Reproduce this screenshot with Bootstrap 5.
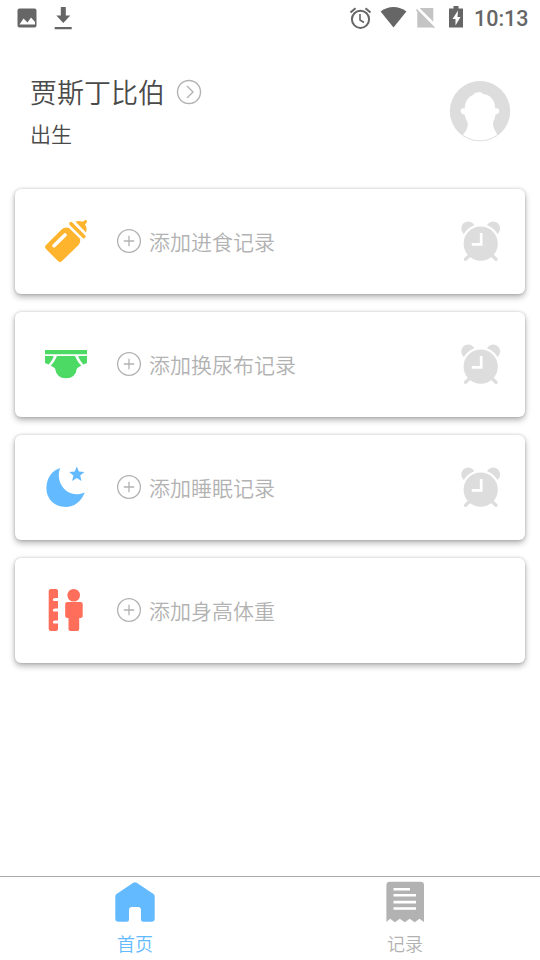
<!DOCTYPE html>
<html lang="zh-CN">
<head>
<meta charset="utf-8">
<meta name="viewport" content="width=device-width, initial-scale=1">
<title>首页</title>
<link href="https://cdn.jsdelivr.net/npm/bootstrap@5.3.0/dist/css/bootstrap.min.css" rel="stylesheet">
<style>
  body { font-family: "Noto Sans CJK SC", sans-serif; font-weight: 350; color: #4a4a4a; background: #fff; height: 960px; overflow: hidden; }
  svg { display: block; flex: none; }
  .status-strip { height: 36px; color: #666; }
  .clock { font: 500 21.5px/36px Roboto, sans-serif; width: 66px; padding-top: 1px; height: 36px; white-space: nowrap; }
  .profile { height: 153px; padding: 36px 29px 0 30px; }
  .baby-name { font-size: 27px; line-height: 40px; font-weight: 350; }
  .baby-age { font-size: 21px; line-height: 32px; padding-top: 5px; }
  .records { padding: 0 15px; gap: 18px; }
  .record { height: 105px; border: 0; border-radius: 6px; box-shadow: 0 3px 6px rgba(0,0,0,.3), 0 0 3px rgba(0,0,0,.18); color: #b2b2b2; padding: 0 23px 2px 29px; }
  .record-label { font-size: 21px; line-height: 30px; }
  .add-mark { margin: 0 7px 0 28px; }
  .tabs { height: 84px; border-top: 1px solid #aaa; }
  .tab { color: #b2b2b2; font-size: 18px; line-height: 26px; padding-top: 3px; gap: 6px; }
  .tab.active { color: #64baff; }
</style>
<script src="https://cdn.jsdelivr.net/npm/bootstrap@5.3.0/dist/js/bootstrap.bundle.min.js"></script>
</head>
<body class="d-flex flex-column m-0">
<svg width="0" height="0" class="position-absolute" aria-hidden="true">
  <symbol id="plus" viewBox="0 0 26 26"><g fill="none" stroke="#b2b2b2" stroke-width="1.3"><circle cx="13" cy="13" r="11.4"/><path d="M13 7.8v10.4M7.8 13h10.4"/></g></symbol>
  <symbol id="alarm" viewBox="460 218.500 42 44">
    <g fill="#ddd"><circle cx="468.2" cy="228" r="6.900"/><circle cx="493.2" cy="228" r="6.900"/></g>
    <circle cx="480.700" cy="243.200" r="18.300" fill="#ddd" stroke="#fff" stroke-width="2.400"/>
    <path d="M470 254.500l-4.500 4.300M491.500 254.500l4.500 4.300" stroke="#ddd" stroke-width="3.300" stroke-linecap="round"/>
    <path d="M481.200 232.500v11.400h-9.400" fill="none" stroke="#fff" stroke-width="2.700"/>
  </symbol>
</svg>

<header class="status-strip d-flex align-items-center justify-content-between flex-shrink-0">
  <svg width="90" height="36" viewBox="0 0 90 36" fill="#666">
    <path fill-rule="evenodd" d="M19.500 8.500h15a2 2 0 0 1 2 2v15a2 2 0 0 1-2 2h-15a2 2 0 0 1-2-2v-15a2 2 0 0 1 2-2zM19.500 24.500h15.500v-2.500l-4-4.500-3.500 5-4-4z"/>
    <path d="M60.800 7h5v8.500h4.500L63.300 23l-7-7.500h4.500zM54.700 27h17v2.200h-17z"/>
  </svg>
  <div class="d-flex">
    <svg width="127" height="36" viewBox="347 0 127 36">
      <g fill="none" stroke="#666" stroke-width="2"><circle cx="360.500" cy="19.300" r="8.600"/><path d="M350.500 12.500l5-4.200M365.500 8.300l5 4.200"/><path d="M360 14v6l4 2.500" stroke-width="1.600"/></g>
      <path d="M393.500 27.500L380.600 11.500C388 5.500 399 5.500 406.400 11.500z" fill="#666"/>
      <path d="M420.300 8H433.300v13.800L420 8.500zM417.300 10.500L433.500 27.500H417.300z" fill="#c4c4c4"/>
      <path d="M416.300 9.500l18 18.200" stroke="#c4c4c4" stroke-width="1.600"/>
      <path d="M453.500 6h5v2.500h4.500v19h-14v-19h4.500z" fill="#666"/>
      <path d="M458 10.500l-5.500 8.500h3v6.500l5-8.500h-3z" fill="#fff"/>
    </svg>
    <span class="clock">10:13</span>
  </div>
</header>

<section class="profile d-flex justify-content-between flex-shrink-0">
  <div>
    <div class="d-flex align-items-center">
      <h1 class="baby-name m-0">贾斯丁比伯</h1>
      <svg class="ms-2" width="32" height="28" viewBox="173 78 32 28" fill="none" stroke="#b2b2b2" stroke-width="1.400"><circle cx="189" cy="92" r="11.500"/><path d="M187 86l6 6-6 6"/></svg>
    </div>
    <div class="baby-age">出生</div>
  </div>
  <svg class="mt-2" width="62" height="62" viewBox="449 79.500 62 62">
    <circle cx="480" cy="110.700" r="30" fill="#ddd"/>
    <path d="M473.500 94.200c1.500-2.700 8.500-3.200 9.500-.7 7 .8 11.800 5.500 12.300 14.400 5.200-1.200 5.400 6 .2 6-.3 3.500-1.500 5.600-2.300 7.600-.7 4.500 1 7.500 3 10.500Q497 134.500 497.500 134.700A29.600 29.600 0 0 1 462.500 134.700Q464 133.500 464.600 132c2.500-3 3.600-6 2.900-10.500-1-2-2.200-4-2.900-7.600-5.200 0-5.400-7.200.1-6 .3-7.500 4-11.700 8.800-13.700z" fill="#fff"/>
    <circle cx="480" cy="110.700" r="29.600" fill="none" stroke="#ddd" stroke-width=".8"/>
  </svg>
</section>

<main class="records d-flex flex-column flex-grow-1">
  <div class="record card flex-row align-items-center">
    <svg width="44" height="44" viewBox="44 219 44 44" fill="#ffb42d">
      <path d="M61.500 229.500Q65 226.300 69 228L79.800 238.500Q81 242 78.500 245L62 261Q60 263 58 261L46 249Q44 247 46 245z"/>
      <path d="M54 245.700L65 235" stroke="#fff" stroke-width="3.600" stroke-linecap="round"/>
      <path d="M71 223.800L83.800 236.500" stroke="#ffb42d" stroke-width="3.700" stroke-linecap="round"/>
      <path d="M75.500 221.800Q79 220 82.500 221.800L85.300 220Q87.500 219.800 87 222.300L85 224.500Q87.500 228 86 232.500z"/>
    </svg>
    <svg class="add-mark" width="26" height="26"><use href="#plus"/></svg>
    <span class="record-label">添加进食记录</span>
    <svg class="ms-auto" width="42" height="44"><use href="#alarm"/></svg>
  </div>
  <div class="record card flex-row align-items-center">
    <svg width="44" height="44" viewBox="44 342 44 44" fill="#4cd964">
      <path d="M45 350h42v4.200H45zM45 356h7.500q1.800 0 .9 1.600-2 4-4.600 6.900L45 363zM87 356h-7.500q-1.800 0-.9 1.600 2 4 4.600 6.900L87 363zM57 356h18q2.800 6.500 6.300 9.500L77 368.200Q75.500 378.200 66 378.200T55 368.200L50.700 365.500Q54.200 362.500 57 356z"/>
    </svg>
    <svg class="add-mark" width="26" height="26"><use href="#plus"/></svg>
    <span class="record-label">添加换尿布记录</span>
    <svg class="ms-auto" width="42" height="44"><use href="#alarm"/></svg>
  </div>
  <div class="record card flex-row align-items-center">
    <svg width="44" height="44" viewBox="44 465 44 44" fill="#64baff">
      <path d="M60.200 468C54.500 482 67 500 84.800 492.500 81 502 74 507 65.500 507 54 507 46.400 498.500 46.400 488.500 46.400 478 52 470.500 60.200 468z"/>
      <path d="M76.800 466.500l2.100 5.100 5.500.4-4.200 3.600 1.300 5.400-4.700-2.900-4.700 2.900 1.300-5.400-4.200-3.600 5.500-.4z"/>
    </svg>
    <svg class="add-mark" width="26" height="26"><use href="#plus"/></svg>
    <span class="record-label">添加睡眠记录</span>
    <svg class="ms-auto" width="42" height="44"><use href="#alarm"/></svg>
  </div>
  <div class="record card flex-row align-items-center">
    <svg width="44" height="44" viewBox="44 588 44 44" fill="#ff6e5a">
      <path d="M51 589h5q2 0 2 2v7h-2.300q-4 0-2.300 3H58v7.500h-2.300q-4 0-2.300 3H58v9h-2.300q-4 0-2.300 3H58v5.500q0 2-2 2h-5q-2.300 0-2.300-2v-38q0-2 2.300-2z"/>
      <circle cx="73.700" cy="595.300" r="6.300"/>
      <path d="M67.500 602h13q2.200 0 2.200 2v12q0 2-3.500 2v11q0 2-2 2h-6.700q-2 0-2-2v-11q-3.300 0-3.300-2v-12q0-2 2.300-2z"/>
    </svg>
    <svg class="add-mark" width="26" height="26"><use href="#plus"/></svg>
    <span class="record-label">添加身高体重</span>
  </div>
</main>

<nav class="tabs row g-0 flex-shrink-0">
  <div class="tab active col-6 d-flex flex-column align-items-center">
    <svg width="44" height="44" viewBox="113 880 44 44"><path d="M133.300 882.800q1.700-1 3.400 0L153.500 894q1.200.8 1.200 2.500V918.500q0 3.200-3.200 3.200H143q-2 0-2-2V910q0-3-3-3h-6q-3 0-3 3v9.700q0 2-2 2h-8.500q-3.200 0-3.200-3.200V896.500q0-1.700 1.200-2.500z" fill="#64baff"/></svg>
    <span>首页</span>
  </div>
  <div class="tab col-6 d-flex flex-column align-items-center">
    <svg width="44" height="44" viewBox="383 880 44 44"><path d="M389.800 881.800h30.800q3.400 0 3.400 3.400v36.800l-4.500-3.300-4.800 3.500-5-3.500-4.900 3.500-5-3.500-4.900 3.500-4.800-3.500-3.700 3.300V885.200q0-3.400 3.400-3.400z" fill="#b2b2b2"/><path d="M393.500 889.200H410M393.500 895.300h22.500M393.500 902.100h22.500M393.500 908.500h22.500" stroke="#fff" stroke-width="2.600"/></svg>
    <span>记录</span>
  </div>
</nav>
</body>
</html>
